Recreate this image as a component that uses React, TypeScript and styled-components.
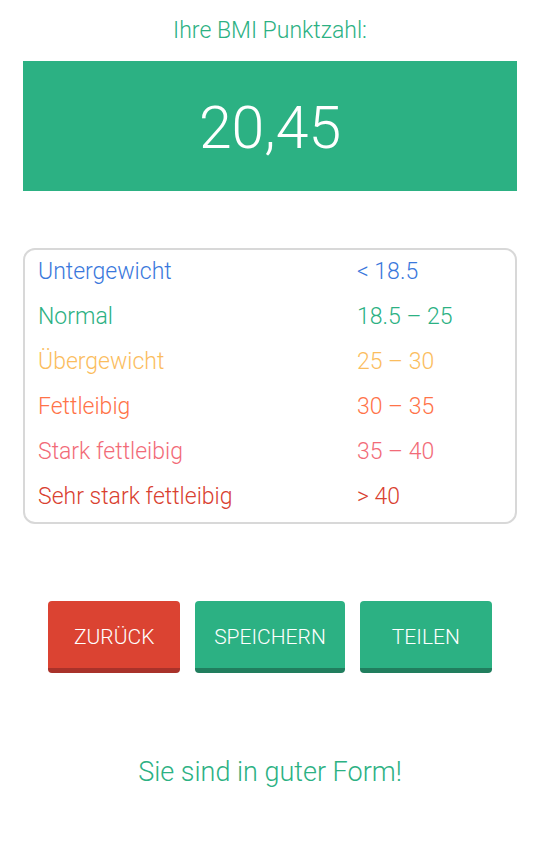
import React from "react";
import styled, { createGlobalStyle } from "styled-components";

const GlobalStyle = createGlobalStyle`
  html, body { margin: 0; padding: 0; background: #ffffff; }
  body { font-family: Roboto, "Noto Sans", "Liberation Sans", sans-serif; }
  * { box-sizing: border-box; }
`;

const GREEN = "#2cb183";

const Page = styled.div`
  width: 540px;
  padding: 0 23px;
  display: flex;
  flex-direction: column;
  align-items: stretch;
`;

const Title = styled.div`
  margin-top: 18px;
  height: 26px;
  line-height: 26px;
  text-align: center;
  font-size: 23px;
  font-weight: 300;
  color: ${GREEN};
`;

const ScoreBox = styled.div`
  margin-top: 17px;
  height: 130px;
  padding-top: 2px;
  background: ${GREEN};
  color: #ffffff;
  display: flex;
  align-items: center;
  justify-content: center;
  font-size: 59px;
  font-weight: 300;
`;

const Table = styled.div`
  margin-top: 57px;
  border: 2px solid #d8d8d8;
  border-radius: 12px;
  padding: 0 0 2px 0;
  display: flex;
  flex-direction: column;
`;

const Row = styled.div<{ $color: string }>`
  height: 45px;
  display: grid;
  grid-template-columns: 319px 1fr;
  align-items: center;
  padding-left: 13px;
  padding-bottom: 3px;
  font-size: 23px;
  font-weight: 300;
  color: ${(p) => p.$color};
`;

const Buttons = styled.div`
  margin-top: 77px;
  display: flex;
  justify-content: center;
  gap: 15px;
`;

const Button = styled.button<{ $bg: string; $shade: string }>`
  min-width: 132px;
  height: 72px;
  padding: 4px 19px 0;
  border: none;
  border-bottom: 5px solid ${(p) => p.$shade};
  border-radius: 4px;
  background: ${(p) => p.$bg};
  color: #ffffff;
  font-family: Roboto, "Noto Sans", "Liberation Sans", sans-serif;
  font-size: 21px;
  font-weight: 300;
  text-transform: uppercase;
  cursor: pointer;
`;

const Message = styled.div`
  margin-top: 83px;
  text-align: center;
  font-size: 27px;
  font-weight: 300;
  color: ${GREEN};
`;

const rows = [
  { label: "Untergewicht", range: "< 18.5", color: "#3a78dc" },
  { label: "Normal", range: "18.5 – 25", color: "#2cb183" },
  { label: "Übergewicht", range: "25 – 30", color: "#fbbd5e" },
  { label: "Fettleibig", range: "30 – 35", color: "#ff7348" },
  { label: "Stark fettleibig", range: "35 – 40", color: "#f26b78" },
  { label: "Sehr stark fettleibig", range: "> 40", color: "#d9402f" },
];

export default function App() {
  return (
    <>
      <GlobalStyle />
      <Page>
        <Title>Ihre BMI Punktzahl:</Title>
        <ScoreBox>20,45</ScoreBox>
        <Table>
          {rows.map((r) => (
            <Row key={r.label} $color={r.color}>
              <span>{r.label}</span>
              <span>{r.range}</span>
            </Row>
          ))}
        </Table>
        <Buttons>
          <Button $bg="#db4332" $shade="#a9322a">Zurück</Button>
          <Button $bg={GREEN} $shade="#217e5e">Speichern</Button>
          <Button $bg={GREEN} $shade="#217e5e">Teilen</Button>
        </Buttons>
        <Message>Sie sind in guter Form!</Message>
      </Page>
    </>
  );
}
